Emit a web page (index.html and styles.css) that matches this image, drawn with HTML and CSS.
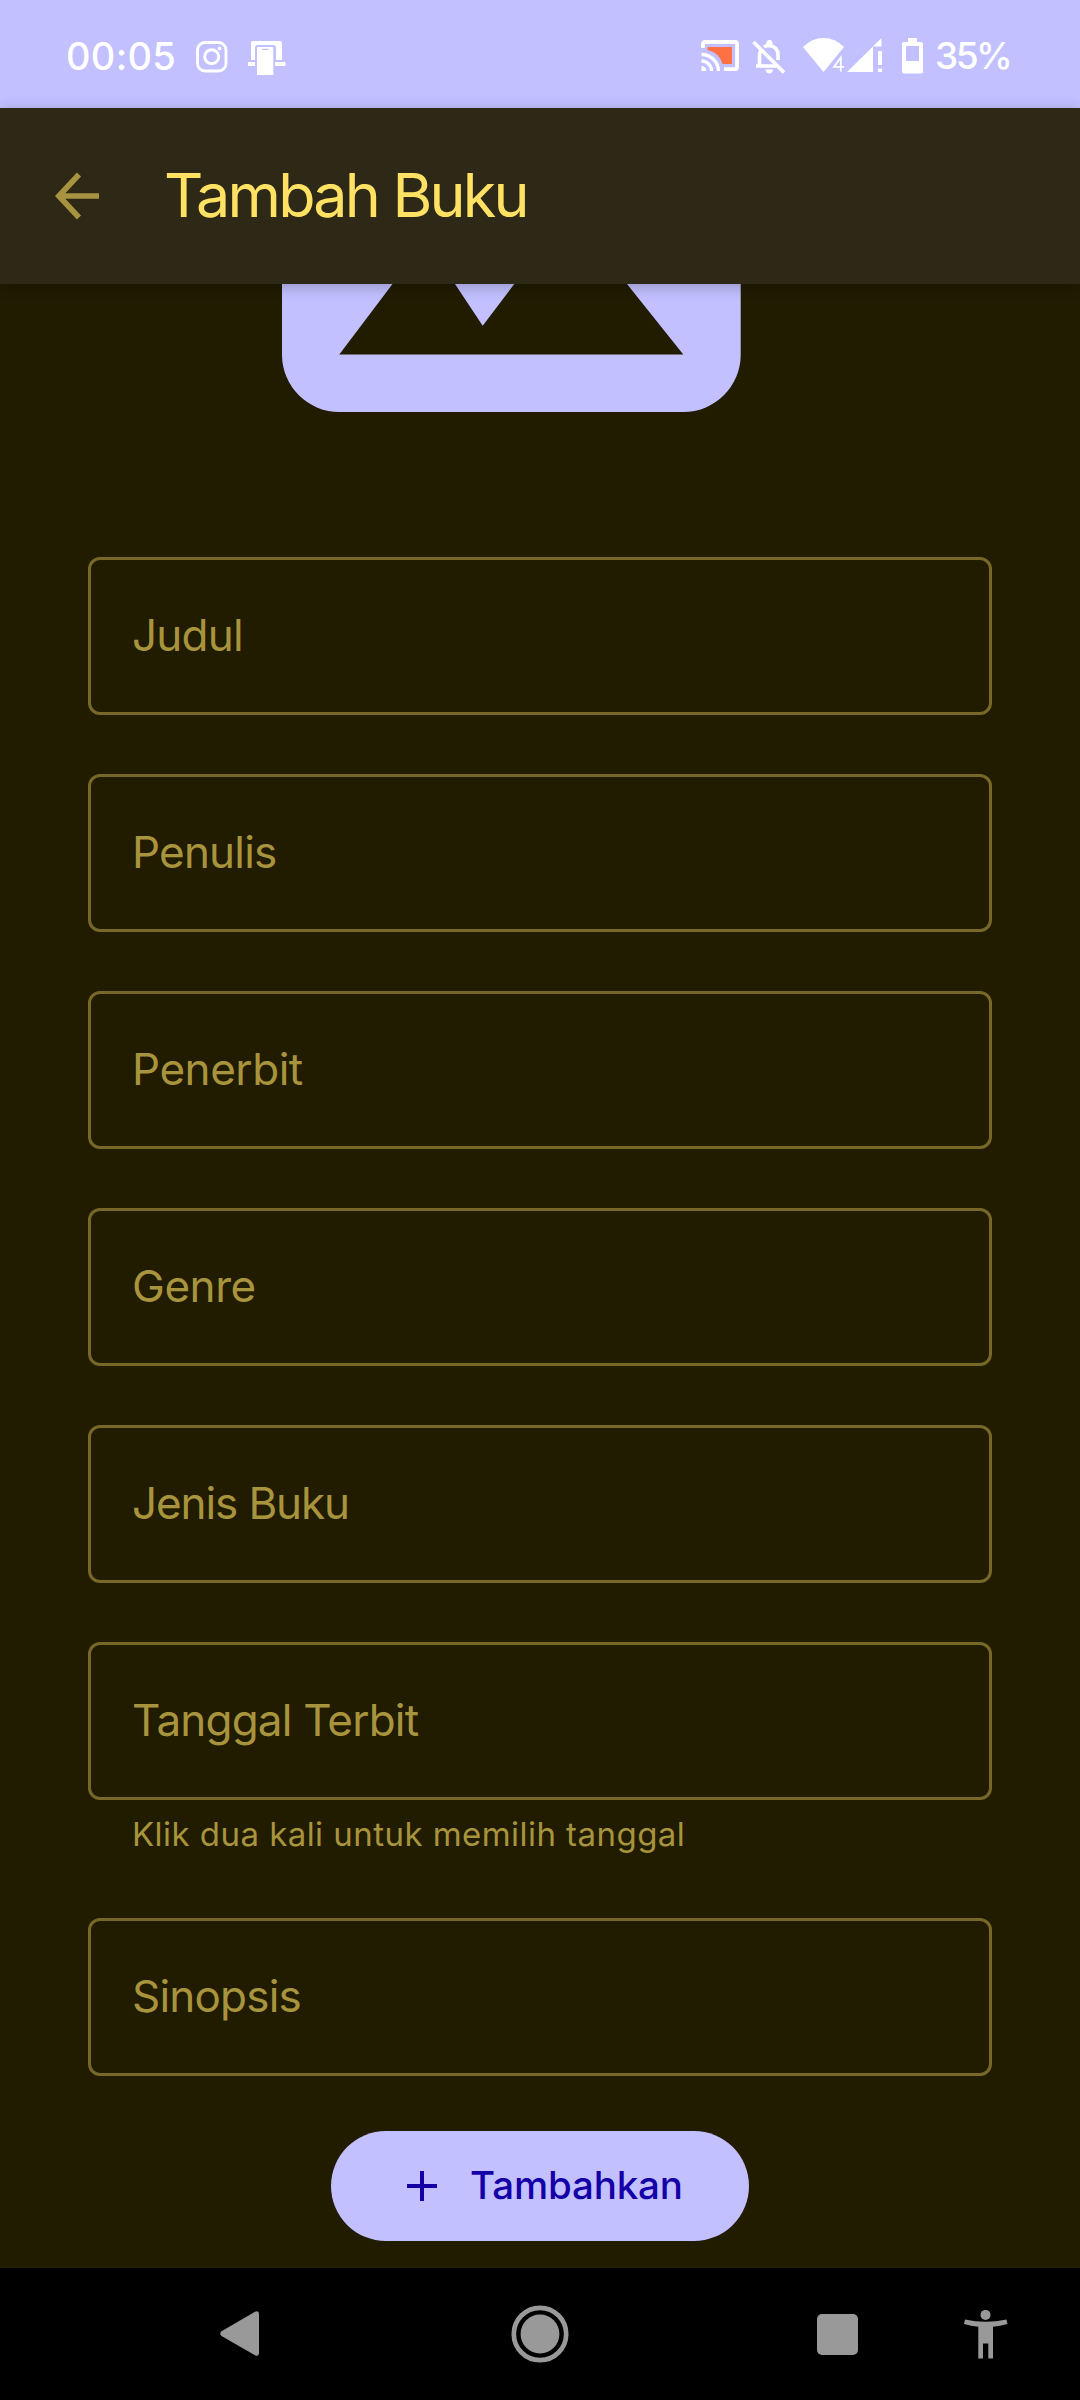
FILE: index.html
```html
<!DOCTYPE html>
<html lang="id">
<head>
<meta charset="utf-8">
<title>Tambah Buku</title>
<link rel="stylesheet" href="styles.css">
</head>
<body>
<div class="status">
  <span class="clock">00:05</span>
  <svg class="insta" width="32" height="32" viewBox="0 0 32 32" fill="none" stroke="#fff"><rect x="1.5" y="1.5" width="28.500" height="28.500" rx="7.500" stroke-width="2.800"/><circle cx="15.700" cy="15.700" r="7" stroke-width="3"/><circle cx="23.600" cy="7.400" r="1.900" fill="#fff" stroke="none"/></svg>
  <svg class="device" width="38" height="36" viewBox="0 0 38 36" fill="#fff"><path d="M3 19V1.500Q3 0 4.500 0H32Q34 0 34 2V19H28V7Q28 4 25 4H9.500Q7 4 7 7V19ZM0 21H7V25H0ZM27 21H37.500V25H27Z"/><path fill-rule="evenodd" d="M9.500 6H24Q25.300 6 25.300 7.500V34H9V7Q9 6 9.500 6ZM14 7.800V9H20.500V7.800Z"/></svg>
  <span class="spacer"></span>
  <svg class="cast" width="38" height="32" viewBox="0 0 38 32"><path d="M6.500 7H31V24H21.500A20 20 0 0 0 6.500 10Z" fill="#ff7043"/><g fill="none" stroke="#fff" stroke-width="3.800"><path d="M2 8V4Q2 2 4 2H34Q36 2 36 4V27Q36 29.200 34 29.200H23"/><path d="M.5 14.500A17 17 0 0 1 17.500 31M.5 21A10 10 0 0 1 10.500 31" stroke-width="3.300"/></g><path d="M.5 26A5 5 0 0 1 5.500 31H.5Z" fill="#fff"/></svg>
  <svg class="bell" width="34" height="34" viewBox="0 0 34 34" fill="none" stroke="#fff" stroke-width="3.600"><path d="M1.500 2L32 32.500M8.500 11Q7.500 13 7.500 16V26M4 26H26M12 7Q14 5.500 17 5.500Q26 6.500 26 15V20"/><path d="M14.200 4V3Q14.500 0 17.500 0T20.500 3V5ZM13.500 29.500H21Q20.500 33.500 17.300 33.500T13.500 29.500Z" fill="#fff" stroke="none"/></svg>
  <svg class="wifi" width="42" height="35" viewBox="0 0 42 35"><path d="M0 9Q9 0 20.500 0T41 9L20.500 34Z" fill="#fff"/><path d="M37.800 33V19.600L30.800 29H41" fill="none" stroke="#c2c0ff" stroke-width="4"/><path d="M37.800 33.500V19.600L31 28.800H41" fill="none" stroke="#fff" stroke-width="1.800"/></svg>
  <svg class="signal" width="36" height="35" viewBox="0 0 36 35" fill="#fff"><path d="M0 34L34.500 0V8.500H26V34ZM31 13H35V27H31ZM31 30.500H35V34H31Z"/></svg>
  <svg class="battery" width="21" height="36" viewBox="0 0 21 36"><path fill-rule="evenodd" fill="#fff" d="M6 0H15V4H19Q21 4 21 6V33.500Q21 35.500 19 35.500H2Q0 35.500 0 33.500V6Q0 4 2 4H6ZM4 8V23H17V8Z"/></svg>
  <span class="percent">35%</span>
</div>
<header class="appbar">
  <svg width="46" height="48" viewBox="0 0 46 48" fill="none" stroke="#a89440" stroke-width="5.600"><path d="M44 24H5M24 2.500L3.800 24L24 45.500"/></svg>
  <h1>Tambah Buku</h1>
</header>
<main class="content">
  <svg class="cover" width="460" height="128" viewBox="0 0 460 128"><path d="M0 0H458.700V71A57.300 57.300 0 0 1 401.400 128H57.300A57.300 57.300 0 0 1 0 71Z" fill="#c2c0ff"/><path d="M57.300 70.500L110.500 0H173L200.700 41.700L232.300 0H345L401.300 70.500Z" fill="#211b00"/></svg>
  <form class="form">
    <div class="field">Judul</div>
    <div class="field">Penulis</div>
    <div class="field loose">Penerbit</div>
    <div class="field loose">Genre</div>
    <div class="field tight">Jenis Buku</div>
    <div class="group">
      <div class="field">Tanggal Terbit</div>
      <p class="hint">Klik dua kali untuk memilih tanggal</p>
    </div>
    <div class="field">Sinopsis</div>
  </form>
  <button class="add" type="button"><svg width="30" height="30" viewBox="0 0 30 30" stroke="#1500a8" stroke-width="4"><path d="M15 0V30M0 15H30"/></svg><span>Tambahkan</span></button>
</main>
<nav class="nav">
  <svg class="back" width="40" height="46" viewBox="0 0 40 46" fill="#999"><path d="M35 .8Q39 -.8 39 3V42Q39 46 35 44.200L1.500 25Q-1 22.700 1.500 20.300Z"/></svg>
  <svg class="home" width="58" height="58" viewBox="0 0 58 58"><circle cx="29" cy="29" r="26.200" fill="none" stroke="#999" stroke-width="4.700"/><circle cx="29" cy="29" r="19.400" fill="#999"/></svg>
  <span class="recent"></span>
  <svg class="access" width="44" height="49" viewBox="0 0 44 49" fill="#999"><circle cx="21.500" cy="4.900" r="5"/><path d="M1 9.500Q21.500 14 42.500 9.500L43.500 14Q36 16.200 29 16.800V48.500H24.300V33.500H19V48.500H14.300V16.800Q7 16.200 0 14Z"/></svg>
</nav>
</body>
</html>
```

FILE: styles.css
```css
* { box-sizing: border-box; }
body {
  margin: 0;
  width: 1080px;
  height: 2400px;
  display: flex;
  flex-direction: column;
  background: #211b00;
  color: #a8943c;
  font-family: Inter, Roboto, sans-serif;
}
.status {
  height: 108px;
  display: flex;
  align-items: flex-start;
  padding: 38px 71px 0 66px;
  background: #c2c0ff;
  color: #fff;
  font-size: 38px;
  font-weight: 500;
  line-height: 36px;
  white-space: nowrap;
}
.clock { width: 130px; letter-spacing: .3px; }
.insta { margin-top: 3px; }
.device { margin: 3px 0 0 20px; }
.spacer { flex: 1; }
.cast { margin-top: 2px; }
.bell { margin: 2px 0 0 13px; }
.wifi { margin-left: 17px; }
.signal { margin-left: 2px; }
.battery { margin-left: 19px; }
.percent {
  width: 74px;
  margin-left: 12px;
  font-size: 37px;
  letter-spacing: -2.500px;
}
.appbar {
  position: relative;
  z-index: 1;
  height: 176px;
  display: flex;
  align-items: center;
  padding-left: 55px;
  background: #2e2817;
  box-shadow: 0 3px 14px rgba(0, 0, 0, .24);
}
h1 {
  margin: 0 0 0 63px;
  padding-bottom: 3px;
  color: #ffe164;
  font-size: 61px;
  font-weight: 400;
  line-height: 80px;
  letter-spacing: -2.800px;
}
.content {
  flex: 1;
  display: flex;
  flex-direction: column;
  padding: 0 88px;
}
.cover { margin-left: 194px; }
.form {
  margin-top: 145px;
  display: flex;
  flex-direction: column;
  gap: 59px;
}
.field {
  height: 158px;
  display: flex;
  align-items: center;
  border: 3px solid #776828;
  border-radius: 12px;
  padding: 0 41px 3px;
  font-size: 44px;
  letter-spacing: -.800px;
}
.loose { letter-spacing: -.450px; }
.tight { letter-spacing: -1.100px; }
.group { height: 217px; }
.hint {
  margin: 14px 0 0 44px;
  font-size: 33px;
  line-height: 40px;
  letter-spacing: .450px;
  white-space: nowrap;
}
.add {
  align-self: center;
  width: 418px;
  height: 110px;
  margin-top: 55px;
  padding: 0 0 0 76px;
  display: flex;
  align-items: center;
  gap: 33px;
  border: 0;
  border-radius: 55px;
  background: #c2c0ff;
  color: #1500a8;
  font: 500 38.500px Inter, Roboto, sans-serif;
  letter-spacing: -.150px;
}
.add span { padding-bottom: 2px; }
.nav {
  height: 132px;
  display: flex;
  align-items: center;
  padding-left: 220px;
  background: #000;
}
.home { margin-left: 251px; }
.recent {
  width: 41px;
  height: 41px;
  margin-left: 248px;
  border-radius: 5px;
  background: #999;
}
.access { margin-left: 106px; }
```
